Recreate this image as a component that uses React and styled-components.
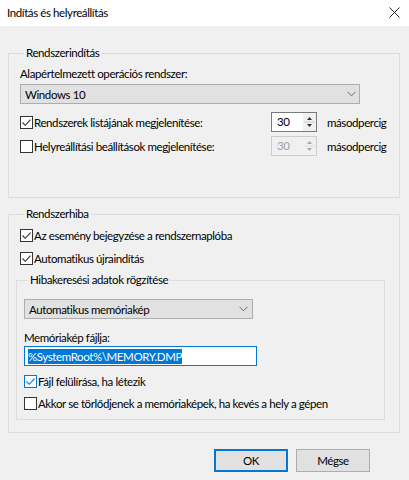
import React from 'react';
import styled, { createGlobalStyle } from 'styled-components';

const GlobalStyle = createGlobalStyle`
  html, body {
    margin: 0;
    padding: 0;
    background: #f0f0f0;
  }
  * {
    box-sizing: border-box;
  }
`;

function CheckBox({ checked, accent }) {
  return (
    <Box $accent={accent}>
      {checked && (
        <svg width="11" height="11" viewBox="0 0 11 11">
          <path d="M1.5 5.5 L4.2 8.3 L9.6 2.6" fill="none" stroke={accent ? '#0078d7' : '#333'} strokeWidth="1.1" />
        </svg>
      )}
    </Box>
  );
}

function Chevron() {
  return (
    <svg width="9" height="6" viewBox="0 0 9 6">
      <path d="M0.5 0.8 L4.5 4.8 L8.5 0.8" fill="none" stroke="#666" strokeWidth="1" />
    </svg>
  );
}

function Spinner({ value, disabled }) {
  const c = disabled ? '#a8a8a8' : '#333';
  return (
    <SpinBox $disabled={disabled}>
      <SpinText $disabled={disabled}>{value}</SpinText>
      <SpinArrows $disabled={disabled}>
        <svg width="13" height="18" viewBox="0 0 13 18">
          <path d="M4 7 L6.5 4 L9 7 Z" fill={c} />
          <path d="M4 11 L6.5 14 L9 11 Z" fill={c} />
          <line x1="1" y1="9" x2="12" y2="9" stroke={disabled ? '#e0e0e0' : '#cfcfcf'} />
        </svg>
      </SpinArrows>
    </SpinBox>
  );
}

function App() {
  return (
    <Window>
      <GlobalStyle />
      <TitleBar>
        <span>Indítás és helyreállítás</span>
        <svg width="11" height="11" viewBox="0 0 11 11">
          <path d="M0.5 0.5 L10.5 10.5 M10.5 0.5 L0.5 10.5" stroke="#222" strokeWidth="1" />
        </svg>
      </TitleBar>
      <Body>
        <Group $top={19} $height={153}>
          <Legend>Rendszerindítás</Legend>
          <Label $top={5}>Alapértelmezett operációs rendszer:</Label>
          <Select $width={340} $top={2} $pad={3}>
            <span>Windows 10</span>
            <Chevron />
          </Select>
          <SpinRow $gap={8}>
            <CheckLabel>
              <CheckBox checked />
              <span>Rendszerek listájának megjelenítése:</span>
            </CheckLabel>
            <Spinner value="30" />
            <Unit>másodpercig</Unit>
          </SpinRow>
          <SpinRow $gap={4}>
            <CheckLabel>
              <CheckBox />
              <span>Helyreállítási beállítások megjelenítése:</span>
            </CheckLabel>
            <Spinner value="30" disabled />
            <Unit>másodpercig</Unit>
          </SpinRow>
        </Group>
        <Group $top={8} $height={227}>
          <Legend>Rendszerhiba</Legend>
          <CheckRow $gap={5}>
            <CheckBox checked />
            <span>Az esemény bejegyzése a rendszernaplóba</span>
          </CheckRow>
          <CheckRow $gap={7}>
            <CheckBox checked />
            <span>Automatikus újraindítás</span>
          </CheckRow>
          <SubGroup>
            <Legend>Hibakeresési adatok rögzítése</Legend>
            <Select $width={229} $top={11} $pad={4}>
              <span>Automatikus memóriakép</span>
              <Chevron />
            </Select>
            <Label $top={11}>Memóriakép fájlja:</Label>
            <FileInput>
              <Selected>%SystemRoot%\MEMORY.DMP</Selected>
            </FileInput>
            <CheckRow $gap={7}>
              <CheckBox checked accent />
              <span>Fájl felülírása, ha létezik</span>
            </CheckRow>
            <CheckRow $gap={6}>
              <CheckBox />
              <span>Akkor se törlődjenek a memóriaképek, ha kevés a hely a gépen</span>
            </CheckRow>
          </SubGroup>
        </Group>
        <Buttons>
          <Button $default>OK</Button>
          <Button>Mégse</Button>
        </Buttons>
      </Body>
    </Window>
  );
}

const Window = styled.div`
  width: 409px;
  height: 480px;
  background: #f0f0f0;
  font-family: Lato, 'Liberation Sans', sans-serif;
  font-size: 11.5px;
  letter-spacing: -0.4px;
  color: #000;
  overflow: hidden;
`;

const TitleBar = styled.div`
  height: 26px;
  background: #fff;
  display: flex;
  align-items: center;
  justify-content: space-between;
  padding: 0 9px 2px 7px;
`;

const Body = styled.div`
  padding: 0 9px 0 8px;
`;

const Group = styled.fieldset`
  margin: ${(p) => p.$top}px 0 0;
  border: 1px solid #dcdcdc;
  padding: 0 0 0 11px;
  height: ${(p) => p.$height}px;
  min-width: 0;
`;

const SubGroup = styled.fieldset`
  margin: 6px 14px 0 -4px;
  border: 1px solid #dcdcdc;
  padding: 0 0 0 7px;
  height: 148px;
  min-width: 0;
`;

const Legend = styled.legend`
  padding: 0 2px;
  margin-left: 4px;
  line-height: 16px;
`;

const Label = styled.div`
  margin-top: ${(p) => p.$top || 0}px;
  line-height: 16px;
`;

const Select = styled.div`
  width: ${(p) => p.$width}px;
  height: 20px;
  margin-top: ${(p) => p.$top}px;
  background: #e1e1e1;
  border: 1px solid #adadad;
  display: flex;
  align-items: center;
  justify-content: space-between;
  padding: 0 ${(p) => p.$pad}px 0 4px;
`;

const SpinRow = styled.div`
  display: flex;
  align-items: center;
  margin-top: ${(p) => p.$gap}px;
  height: 20px;
`;

const CheckLabel = styled.div`
  display: flex;
  align-items: center;
  gap: 1px;
  width: 251px;
`;

const CheckRow = styled.div`
  display: flex;
  align-items: center;
  gap: 1px;
  height: 16px;
  margin-top: ${(p) => p.$gap}px;
`;

const Box = styled.span`
  width: 13px;
  height: 13px;
  flex: none;
  border: 1px solid ${(p) => (p.$accent ? '#0078d7' : '#333')};
  background: #fff;
  display: flex;
  align-items: center;
  justify-content: center;
`;

const SpinBox = styled.div`
  width: 46px;
  height: 20px;
  display: flex;
  border: 1px solid ${(p) => (p.$disabled ? '#cccccc' : '#7a7a7a')};
  background: ${(p) => (p.$disabled ? '#f0f0f0' : '#fff')};
`;

const SpinText = styled.div`
  flex: 1;
  padding: 2px 0 0 5px;
  color: ${(p) => (p.$disabled ? '#a0a0a0' : '#000')};
`;

const SpinArrows = styled.div`
  width: 13px;
  background: #f0f0f0;
  display: flex;
`;

const Unit = styled.span`
  margin-left: 10px;
`;

const FileInput = styled.div`
  width: 233px;
  height: 20px;
  border: 1px solid #0078d7;
  background: #fff;
  display: flex;
  align-items: center;
  padding-left: 3px;
`;

const Selected = styled.span`
  background: #0078d7;
  color: #fff;
  line-height: 15px;
`;

const Buttons = styled.div`
  display: flex;
  justify-content: flex-end;
  gap: 8px;
  margin-top: 16px;
  padding-right: 30px;
`;

const Button = styled.div`
  width: 74px;
  height: 23px;
  display: flex;
  align-items: center;
  justify-content: center;
  background: #e1e1e1;
  border: ${(p) => (p.$default ? '2px solid #0078d7' : '1px solid #adadad')};
`;

export default App;
